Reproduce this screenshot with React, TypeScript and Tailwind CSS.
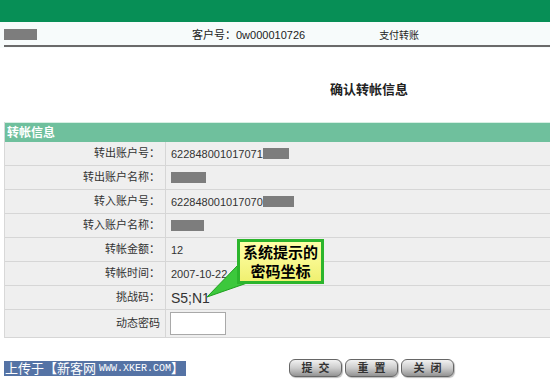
const rows: { label: string; value: string; mask?: number; big?: boolean }[] = [
  { label: '转出账户号：', value: '622848001017071', mask: 26 },
  { label: '转出账户名称：', value: '', mask: 35 },
  { label: '转入账户号：', value: '622848001017070', mask: 31 },
  { label: '转入账户名称：', value: '', mask: 33 },
  { label: '转帐金额：', value: '12' },
  { label: '转帐时间：', value: '2007-10-22' },
  { label: '挑战码：', value: 'S5;N1', big: true },
];

function Btn({ text }: { text: string }) {
  return (
    <button className="h-[18px] w-[53px] rounded-[6px] border border-[#666] bg-gradient-to-b from-[#f2f2f2] via-[#cccccc] to-[#939393] text-[11px] font-bold tracking-[6px] pl-[6px] text-[#333] shadow-[1px_1px_1px_#bbb] leading-none">
      {text}
    </button>
  );
}

export default function App() {
  return (
    <div className="relative w-[550px] h-[382px] overflow-hidden bg-white text-[#222] font-['Liberation_Sans','Noto_Sans_CJK_SC',sans-serif]">
      <div className="h-[22px] bg-[#078f56]" />

      {/* customer bar */}
      <div className="h-[26px] bg-[#f7fbfb] pl-[4px]">
        <div className="flex items-center h-[25px] border-b-2 border-[#6a6a6a] text-[11px]">
          <div className="w-[33px] h-[11px] bg-[#7d7d7d] mt-[2px]" />
          <span className="ml-[155px] mt-[3px]">客户号：0w000010726</span>
          <span className="ml-[74px] mt-[3px] text-[10px]">支付转账</span>
        </div>
      </div>

      {/* title */}
      <div className="h-[74px] flex items-center pl-[330px] pt-[10px]">
        <h1 className="text-[13px] font-bold">确认转帐信息</h1>
      </div>

      {/* table */}
      <div className="ml-[4px] bg-[#efefef] border-l border-[#d8d8d8]">
        <div className="h-[20px] bg-[#6fc09d] border-t border-[#d6efe3] flex items-center pl-[2px] text-white text-[12px] font-bold">
          转帐信息
        </div>
        {rows.map((r) => (
          <div key={r.label} className="flex h-[24px] border-b border-[#d6d6d6] text-[11px] text-[#333]">
            <div className="w-[161px] border-r border-[#d6d6d6] flex items-center justify-end pr-[5px]">{r.label}</div>
            <div className="flex items-center pl-[5px]">
              {r.value && <span className={r.big ? 'text-[14px] mt-[2px]' : 'mt-[1px]'}>{r.value}</span>}
              {r.mask && <span className="h-[11px] bg-[#7d7d7d]" style={{ width: r.mask }} />}
            </div>
          </div>
        ))}
        <div className="flex h-[28px] border-b border-[#d6d6d6] text-[11px] text-[#333]">
          <div className="w-[161px] border-r border-[#d6d6d6] flex items-center justify-end pr-[5px]">动态密码</div>
          <div className="flex items-center pl-[4px]">
            <input className="w-[56px] h-[23px] bg-white border border-[#a9a9a9] outline-none" />
          </div>
        </div>
      </div>

      {/* footer */}
      <div className="flex items-center mt-[20px] h-[20px]">
        <div className="ml-[4px] h-[15px] bg-[#5573a5] text-white text-[13px] leading-[15px] pr-[2px] flex items-center">
          <span className="pl-[1px]">上传于【新客网</span>
          <span className="font-['Liberation_Mono',monospace] text-[10px] ml-[3px]">WWW.XKER.COM</span>
          <span>】</span>
        </div>
        <div className="flex gap-[3px] ml-[103px]">
          <Btn text="提交" />
          <Btn text="重置" />
          <Btn text="关闭" />
        </div>
      </div>

      {/* annotation callout */}
      <svg className="absolute left-0 top-0" width="550" height="382">
        <polygon points="239,264 250,282 207,297" fill="#3cc83c" stroke="#1ea01e" strokeWidth="1" />
      </svg>
      <div className="absolute left-[237px] top-[239px] w-[87px] h-[45px] border-[3px] border-[#2cb52c] bg-gradient-to-b from-[#ffffa8] to-[#f0f070] text-[15px] leading-[19px] font-bold text-black flex flex-col items-center justify-center">
        <span>系统提示的</span>
        <span>密码坐标</span>
      </div>
    </div>
  );
}
